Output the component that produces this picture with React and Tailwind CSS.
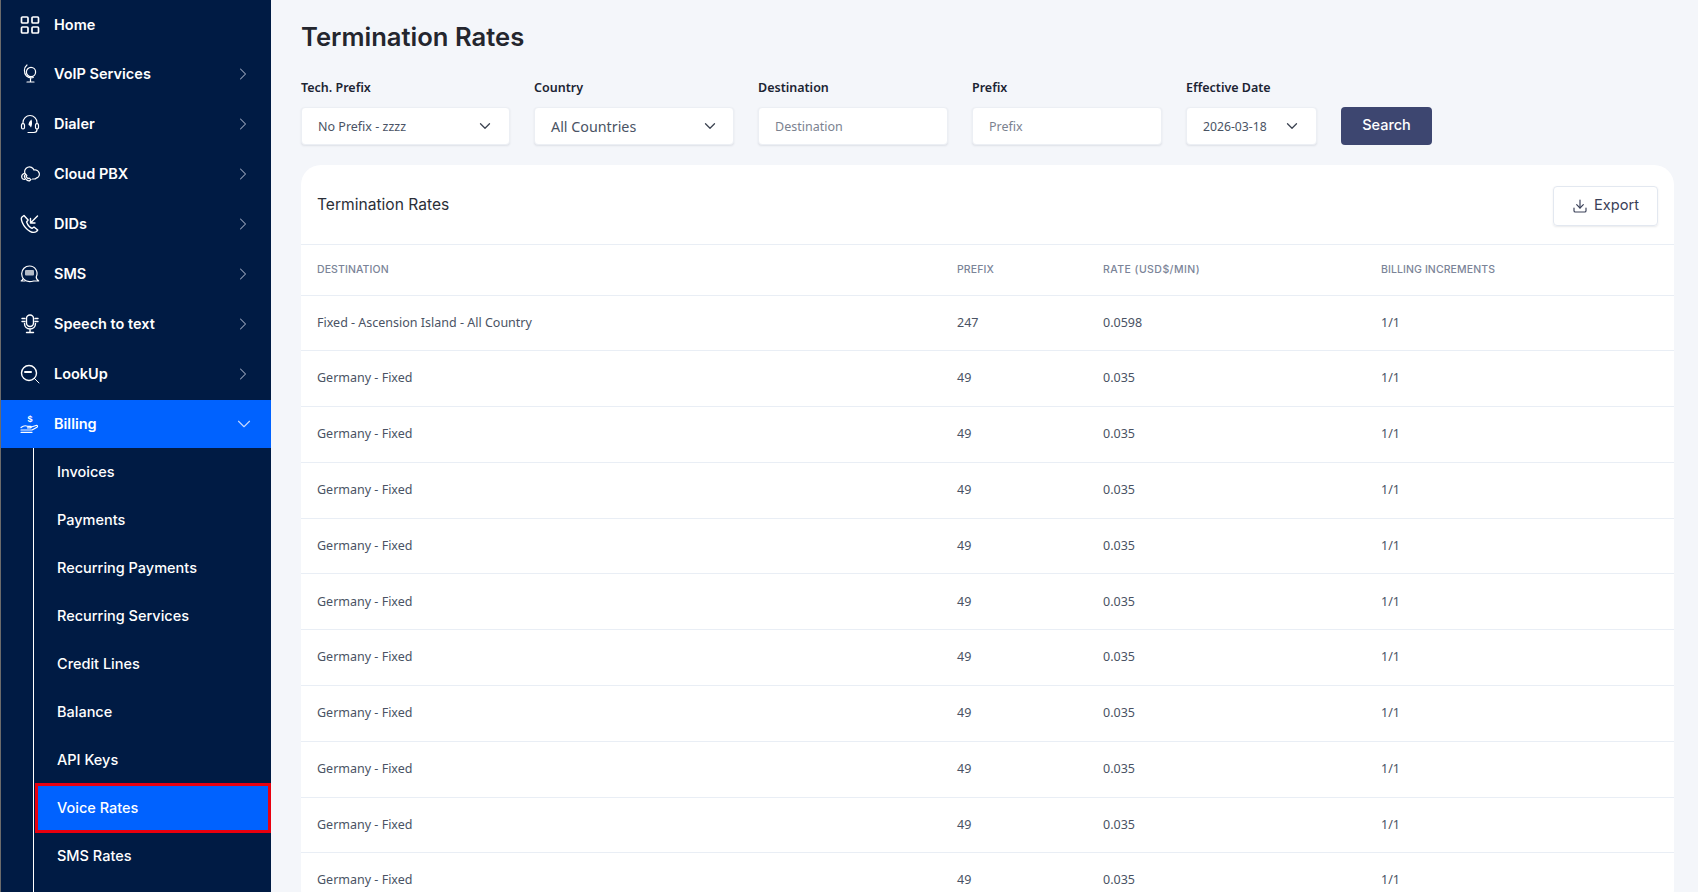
import { ChevronDown, ChevronRight, Download } from "lucide-react";

const poppins = "font-['Inter','Liberation_Sans',sans-serif]";
const body = "font-['Noto_Sans','Liberation_Sans',sans-serif]";

function Home() {
    return (
        <svg width="20" height="20" viewBox="0 0 20 20" fill="none" stroke="currentColor" strokeWidth="1.7">
            <rect x="1.5" y="2" width="6.5" height="6" rx="1" />
            <rect x="12" y="2" width="6.5" height="6" rx="1" />
            <rect x="1.5" y="12" width="6.5" height="6" rx="1" />
            <rect x="12" y="12" width="6.5" height="6" rx="1" />
        </svg>
    );
}

function Globe() {
    return (
        <svg width="20" height="20" viewBox="0 0 20 20" fill="none" stroke="currentColor" strokeWidth="1.2" strokeLinecap="round">
            <circle cx="11" cy="8" r="4.6" />
            <path d="M7 1C3.800 3.500 3.500 9 6.500 12c2 1.800 4.500 2.300 6.800 1.500" />
            <path d="M10.500 14.500v3M7 18h7" />
        </svg>
    );
}

function Headset() {
    return (
        <svg width="20" height="20" viewBox="0 0 20 20" fill="none" stroke="currentColor" strokeWidth="1.2" strokeLinecap="round">
            <path d="M3 10V8.500a7 7 0 0 1 14 0V10" />
            <rect x="1.500" y="9.500" width="3" height="5.500" rx="1.400" />
            <rect x="15.500" y="9.500" width="3" height="5.500" rx="1.400" />
            <path d="M17 15v.5a3 3 0 0 1-3 3H8" />
            <path d="M11.500 5.500c-2 1.500-3 3.500-3 5.500l1 .5 1.500 2c1-2 1.500-5 .5-8z" fill="currentColor" stroke="none" />
        </svg>
    );
}

function CloudPhone() {
    return (
        <svg width="20" height="20" viewBox="0 0 20 20" fill="none" stroke="currentColor" strokeWidth="1.2" strokeLinecap="round">
            <path d="M5 9.500a4.800 4.800 0 0 1 9-3.500 4.200 4.200 0 0 1 2.200 8.200 3 3 0 0 1-2.200.8h-1.500" />
            <path d="M4.500 9.200C2.500 10 1.500 11.500 1.700 13c.2 1.600 1.600 2.400 2.800 2.400" />
            <path d="M5 11c-.8.8-.6 2.400.6 3.800 1.300 1.500 3.200 2.300 4.300 1.800l1-1-1.800-1.500-.9.500c-.9-.4-1.800-1.400-2-2.300l.6-.8L5.600 10z" />
        </svg>
    );
}

function PhoneIn() {
    return (
        <svg width="20" height="20" viewBox="0 0 20 20" fill="none" stroke="currentColor" strokeWidth="1.400" strokeLinecap="round" strokeLinejoin="round">
            <path d="M4 1.500 2 3c-1 1-.8 3 .3 5.500 1.400 3.200 4.500 7 7.700 8.800 2.400 1.300 5 1.300 6.500.2l1.200-1.500-3.700-3-2 1.300c-2-.8-4.400-3.600-5.400-6.300l1.500-2z" />
            <path d="M17.500 2 10.500 9M10.500 4.500V9H15" />
        </svg>
    );
}

function Chat() {
    return (
        <svg width="20" height="20" viewBox="0 0 20 20" fill="none" stroke="currentColor" strokeWidth="1.200" strokeLinecap="round" strokeLinejoin="round">
            <path d="M9.500 2a7.500 7.500 0 0 1 6.800 10.700c-.3 1.300.6 3 2.400 4.300h-5c-1.300.4-2.800.7-4.200.7a7.500 7.500 0 0 1 0-15.700z" />
            <path d="M3 14.800c-.4.900-1 1.700-1.800 2.200h3.800" />
            <rect x="5" y="6" width="9" height="5.500" rx="1" fill="currentColor" opacity="0.7" stroke="none" />
        </svg>
    );
}

function Mic() {
    return (
        <svg width="20" height="20" viewBox="0 0 20 20" fill="none" stroke="currentColor" strokeWidth="1.400" strokeLinecap="round">
            <rect x="6.500" y="1" width="7" height="11.500" rx="3.500" />
            <path d="M4.500 9.500c0 3.500 2.500 5.500 5.500 5.500s5.500-2 5.500-5.500M10 15v3M6.500 18.500h7" />
            <path d="M2 4.500h3M2 7.500h3M15 4.500h3M15 7.500h3" />
        </svg>
    );
}

function Lookup() {
    return (
        <svg width="20" height="20" viewBox="0 0 20 20" fill="none" stroke="currentColor" strokeWidth="1.400" strokeLinecap="round">
            <circle cx="9" cy="9" r="7.500" />
            <path d="M14.500 14.500 19 19" strokeWidth="1" />
            <path d="M5 8h6" strokeWidth="2" />
        </svg>
    );
}

function Hand() {
    return (
        <svg width="20" height="20" viewBox="0 0 20 20" fill="none" stroke="currentColor" strokeWidth="1.200" strokeLinecap="round" strokeLinejoin="round">
            <path d="M1 13.500c2.500-2 4.500-2.200 6.500-1.200h3c1 0 1 1.500 0 1.500H7.500" />
            <path d="M10.500 13.200 16 11.500c1.500-.4 2 1 1 1.700L12 16H1" />
            <path d="M1 18.300h11" />
            <text x="10" y="8" fontSize="9" fontWeight="700" fill="currentColor" stroke="none" textAnchor="middle" fontFamily="Liberation Sans">$</text>
        </svg>
    );
}

const menu = [
    { label: "Home", icon: Home },
    { label: "VoIP Services", icon: Globe, arrow: true },
    { label: "Dialer", icon: Headset, arrow: true },
    { label: "Cloud PBX", icon: CloudPhone, arrow: true },
    { label: "DIDs", icon: PhoneIn, arrow: true },
    { label: "SMS", icon: Chat, arrow: true },
    { label: "Speech to text", icon: Mic, arrow: true },
    { label: "LookUp", icon: Lookup, arrow: true },
];

const billingLinks = ["Invoices", "Payments", "Recurring Payments", "Recurring Services", "Credit Lines", "Balance", "API Keys", "Voice Rates", "SMS Rates"];

const rows = [
    { dest: "Fixed - Ascension Island - All Country", prefix: "247", rate: "0.0598" },
    ...Array.from({ length: 10 }, () => ({ dest: "Germany - Fixed", prefix: "49", rate: "0.035" })),
];

function MenuItem({ item }) {
    const Icon = item.icon;
    return (
        <div className="flex h-[50px] shrink-0 items-center pl-[19px] pr-[18px] text-white first:h-[49px]">
            <Icon />
            <span className="ml-[14px] flex-1 text-[14.5px] font-semibold">{item.label}</span>
            {item.arrow && <ChevronRight size={20} strokeWidth={1.25} className="text-[#9aa6bd]" />}
        </div>
    );
}

function Sidebar() {
    return (
        <aside className={`flex h-full w-[271px] shrink-0 flex-col overflow-hidden border-l border-[#6b6b6b] bg-[#001b44] ${poppins}`}>
            {menu.map((item) => <MenuItem key={item.label} item={item} />)}
            <div className="mt-px flex h-[48px] shrink-0 items-center bg-[#0062ff] pl-[19px] pr-[16px] text-white">
                <Hand />
                <span className="ml-[14px] flex-1 text-[14.5px] font-semibold">Billing</span>
                <ChevronDown size={22} strokeWidth={1.25} className="text-[#c4d8ff]" />
            </div>
            <div className="ml-[32px] flex-1 border-l border-white">
                {billingLinks.map((link) => (
                    <div key={link} className={link === "Voice Rates"
                        ? "ml-px -my-px flex h-[50px] items-center border-[3px] border-[#e8000f] bg-[#0062ff] pl-[19px] text-[14.5px] font-medium text-white"
                        : "flex h-[48px] items-center pl-[23px] text-[14.5px] font-medium text-white"}>
                        {link}
                    </div>
                ))}
            </div>
        </aside>
    );
}

function Field({ label, width, children }) {
    return (
        <div className={width}>
            <div className={`mb-[10px] text-[12.5px] font-semibold leading-[19px] text-[#1c2433] ${body}`}>{label}</div>
            {children}
        </div>
    );
}

const boxClass = "flex h-[38px] w-full items-center justify-between rounded-[4px] border border-[#eceff4] bg-white shadow-[0_1px_2px_rgba(40,50,70,0.1)]";

export default function App() {
    return (
        <div className="flex h-screen overflow-hidden bg-[#f4f6fa]">
            <Sidebar />
            <main className="min-w-0 flex-1 pl-[30px] pr-[24px]">
                <h1 className={`pt-[20px] text-[25.6px] font-semibold leading-[34px] text-[#24262e] ${poppins}`}>Termination Rates</h1>
                <div className="mt-[24px] flex items-end">
                    <Field label="Tech. Prefix" width="w-[209px]">
                        <div className={`${boxClass} pl-[16px] pr-[15px] text-[12.5px] text-[#4a5364] ${body}`}>
                            <span className="pt-[2px]">No Prefix - zzzz</span>
                            <ChevronDown size={18} strokeWidth={1.75} className="text-[#3d4452]" />
                        </div>
                    </Field>
                    <Field label="Country" width="ml-[24px] w-[200px]">
                        <div className={`${boxClass} pl-[16px] pr-[14px] text-[14.3px] text-[#4a5364] ${body}`}>
                            <span className="pt-[2px]">All Countries</span>
                            <ChevronDown size={18} strokeWidth={1.75} className="text-[#3d4452]" />
                        </div>
                    </Field>
                    <Field label="Destination" width="ml-[24px] w-[190px]">
                        <input placeholder="Destination" className={`${boxClass} px-[16px] text-[12.5px] outline-none placeholder:text-[#7b8290] ${body}`} />
                    </Field>
                    <Field label="Prefix" width="ml-[24px] w-[190px]">
                        <input placeholder="Prefix" className={`${boxClass} px-[16px] text-[12.5px] outline-none placeholder:text-[#7b8290] ${body}`} />
                    </Field>
                    <Field label="Effective Date" width="ml-[24px] w-[131px]">
                        <div className={`${boxClass} pl-[16px] pr-[15px] text-[12.2px] text-[#4a5364] ${body}`}>
                            <span className="pt-[2px]">2026-03-18</span>
                            <ChevronDown size={18} strokeWidth={1.75} className="text-[#3d4452]" />
                        </div>
                    </Field>
                    <button className={`ml-[24px] h-[38px] w-[91px] rounded-[4px] bg-[#3d4670] pb-[2px] text-[14.5px] font-medium text-white ${poppins}`}>Search</button>
                </div>
                <section className="mt-[20px] rounded-[20px] bg-white">
                    <div className="flex h-[80px] items-center justify-between border-b border-[#e9eef5] pl-[16px] pr-[16px]">
                        <h2 className={`text-[15.6px] font-normal text-[#2b2f38] ${poppins}`}>Termination Rates</h2>
                        <button className={`mt-[2px] flex h-[40px] w-[105px] items-center justify-center gap-[6px] rounded-[4px] border border-[#e3e8f0] text-[14.6px] text-[#3a4058] shadow-[0_1px_2px_rgba(40,50,70,0.1)] ${poppins}`}>
                            <Download size={16} strokeWidth={1.75} />
                            Export
                        </button>
                    </div>
                    <table className="w-full table-fixed border-collapse text-left">
                        <colgroup>
                            <col className="w-[640px]" />
                            <col className="w-[146px]" />
                            <col className="w-[278px]" />
                            <col />
                        </colgroup>
                        <thead>
                            <tr className={`h-[50px] border-b border-[#e9eef5] text-[10.5px] font-medium uppercase tracking-[0.1px] text-[#7b8498] ${poppins}`}>
                                <th className="pl-[16px] font-medium">Destination</th>
                                <th className="pl-[16px] font-medium">Prefix</th>
                                <th className="pl-[16px] font-medium tracking-[0.45px]">Rate (USD$/min)</th>
                                <th className="pl-[16px] font-medium">Billing Increments</th>
                            </tr>
                        </thead>
                        <tbody className={`text-[12.5px] text-[#4a5364] ${body}`}>
                            {rows.map((r, i) => (
                                <tr key={i} className="h-[55.8px] border-b border-[#e9eef5]">
                                    <td className="pl-[16px]">{r.dest}</td>
                                    <td className="pl-[16px]">{r.prefix}</td>
                                    <td className="pl-[16px]">{r.rate}</td>
                                    <td className="pl-[16px]">1/1</td>
                                </tr>
                            ))}
                        </tbody>
                    </table>
                </section>
            </main>
        </div>
    );
}
